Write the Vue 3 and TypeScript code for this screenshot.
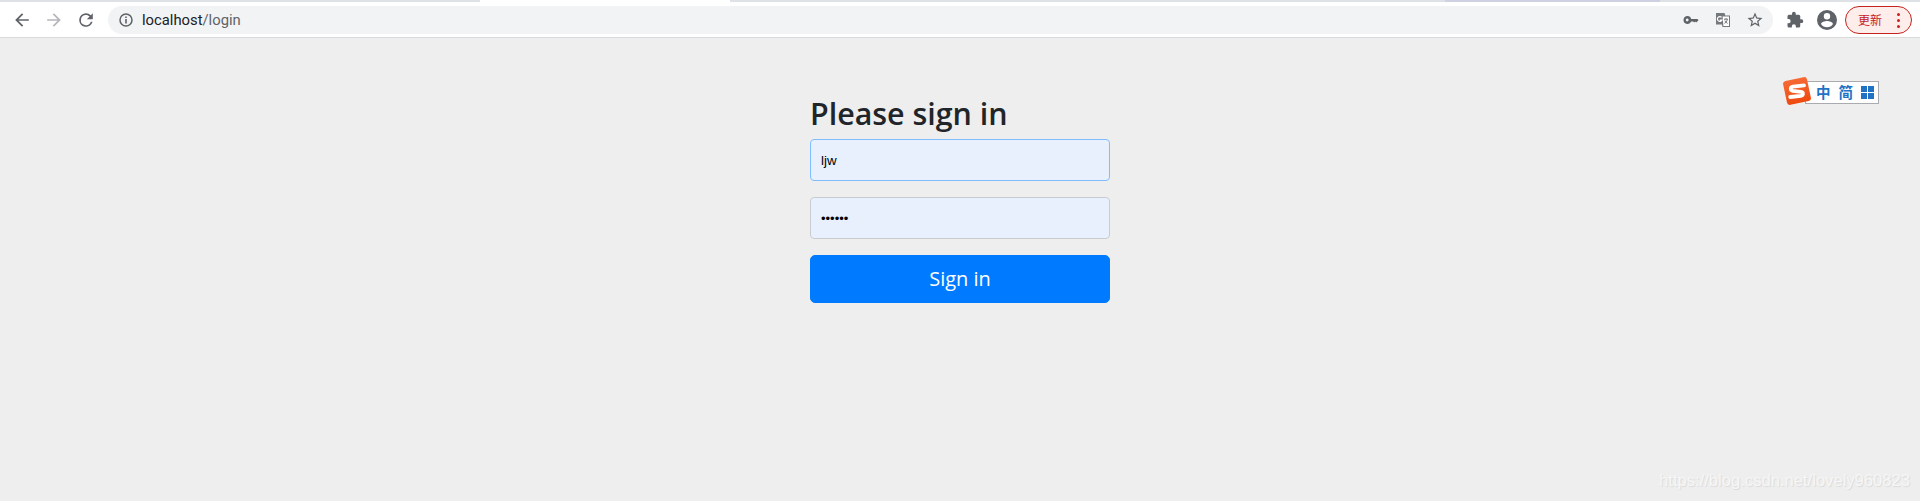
<script setup lang="ts">
const account = 'ljw'
const secret = '••••••'
</script>

<template>
  <div class="page">
    <div class="tabstrip">
      <span class="tab a"></span><span class="tab b"></span><span class="tab c"></span><span class="tab d"></span><span class="tab e"></span>
    </div>
    <header class="toolbar">
      <svg class="nav" viewBox="0 0 24 24" width="24" height="24"><path fill="#5f6368" d="M20 11H7.83l5.59-5.59L12 4l-8 8 8 8 1.41-1.41L7.83 13H20v-2z"/></svg>
      <svg class="nav" viewBox="0 0 24 24" width="24" height="24"><path fill="#b5b7ba" d="M4 11h12.17l-5.59-5.59L12 4l8 8-8 8-1.41-1.41L16.17 13H4v-2z"/></svg>
      <svg class="nav" viewBox="0 0 24 24" width="24" height="24"><path fill="#5f6368" d="M17.65 6.35A7.96 7.96 0 0 0 12 4a8 8 0 1 0 7.73 10h-2.08A6 6 0 1 1 12 6c1.66 0 3.14.69 4.22 1.78L13 11h7V4l-2.35 2.35z"/></svg>
      <div class="omnibox">
        <svg class="info" viewBox="0 0 16 16" width="16" height="16"><circle cx="8" cy="8" r="6" fill="none" stroke="#5f6368" stroke-width="1.5"/><path fill="#5f6368" d="M7.2 7h1.6v4.4H7.2zM7.2 4.6h1.6v1.5H7.2z"/></svg>
        <span class="url"><span class="host">localhost</span>/login</span>
        <span class="spacer"></span>
        <svg class="omni-icon" viewBox="0 0 18 18" width="18" height="18"><path fill="#5f6368" d="M5.5 5a4 4 0 1 0 3.7 5.6h2l1 1 1-1 1 1 2.3-2.4-1-1.2H9.2A4 4 0 0 0 5.5 5zm-.3 2.6a1.4 1.4 0 1 1 0 2.8 1.4 1.4 0 0 1 0-2.8z"/></svg>
        <svg class="omni-icon" viewBox="0 0 18 18" width="18" height="18"><path fill="#75787c" d="M2 2h8.5l.8 2.5H16V16H8.5L8 13.5H2z"/><path fill="#fff" d="M8.6 5.5h6.4v9.5H9.4z"/><path fill="none" stroke="#fff" stroke-width="1.2" d="M7.6 6.3a2.4 2.4 0 1 0 .3 2.9H5.7"/><path fill="none" stroke="#75787c" stroke-width="1" d="M10 8.2h4M12 7.2v1M13.4 8.4c-.5 2-1.8 3.4-3 4M10.8 9.6c.6 1.2 1.6 2.2 2.8 2.8"/></svg>
        <svg class="omni-icon" viewBox="0 0 24 24" width="18" height="18"><path fill="#5f6368" d="M22 9.24l-7.19-.62L12 2 9.19 8.63 2 9.24l5.46 4.73L5.82 21 12 17.27 18.18 21l-1.63-7.03L22 9.24zM12 15.4l-3.76 2.27 1-4.28-3.32-2.88 4.38-.38L12 6.1l1.71 4.04 4.38.38-3.32 2.88 1 4.28L12 15.4z"/></svg>
      </div>
      <svg class="ext" viewBox="0 0 24 24" width="18" height="18"><path fill="#5f6368" d="M20.5 11H19V7a2 2 0 0 0-2-2h-4V3.5a2.5 2.5 0 0 0-5 0V5H4a2 2 0 0 0-2 2v3.8h1.5a2.7 2.7 0 0 1 0 5.4H2V20a2 2 0 0 0 2 2h3.8v-1.5a2.7 2.7 0 0 1 5.4 0V22H17a2 2 0 0 0 2-2v-4h1.5a2.5 2.5 0 0 0 0-5z"/></svg>
      <svg class="avatar" viewBox="0 0 24 24" width="24" height="24"><path fill="#5f6368" d="M12 2a10 10 0 1 0 0 20 10 10 0 0 0 0-20zm0 3a3 3 0 1 1 0 6.4A3 3 0 0 1 12 5zm0 14.2a7.2 7.2 0 0 1-6-3.2c0-2 4-3.1 6-3.1s6 1.1 6 3.1a7.2 7.2 0 0 1-6 3.2z"/></svg>
      <div class="update">
        <span class="update-label">更新</span>
        <span class="dots"><i></i><i></i><i></i></span>
      </div>
    </header>

    <main class="content">
      <form class="signin" @submit.prevent>
        <h1 class="title">Please sign in</h1>
        <div class="field focus">{{ account }}</div>
        <div class="field secret">{{ secret }}</div>
        <button class="submit" type="submit">Sign in</button>
      </form>

      <div class="sogou">
        <svg class="sogou-logo" viewBox="0 0 28 28" width="28" height="28">
          <defs>
            <linearGradient id="sogou-fill" x1="0" y1="0" x2="0" y2="1">
              <stop offset="0" stop-color="#f66a35"/>
              <stop offset="1" stop-color="#ee4a10"/>
            </linearGradient>
          </defs>
          <rect x="1.8" y="1.8" width="24.4" height="24.4" rx="3" fill="url(#sogou-fill)" transform="rotate(-12 14 14)"/>
          <path fill="none" stroke="#fff" stroke-width="3.8" stroke-linecap="round" stroke-linejoin="round" d="M21 8.4L10 9.6c-2.8.4-3 3.6-.3 4.2l8.2 1c2.8.5 2.6 3.7-.2 4.1L7.2 20"/>
        </svg>
        <div class="sogou-bar">
          <span class="sogou-text">中</span>
          <span class="sogou-text">简</span>
          <svg viewBox="0 0 13 13" width="13" height="13"><path fill="#1f72c4" d="M0 0h6v6H0zM7 0h6v6H7zM0 7h6v6H0zM7 7h6v6H7z"/></svg>
        </div>
      </div>

      <div class="watermark">https://blog.csdn.net/lovely960823</div>
    </main>
  </div>
</template>

<style>
html, body { margin: 0; background: #eeeeee; }
</style>

<style scoped>
.page {
  height: 501px;
  display: flex;
  flex-direction: column;
  overflow: hidden;
  font-family: "Open Sans", "Noto Sans", sans-serif;
}
.tabstrip { height: 2px; display: flex; background: #fff; }
.tab { display: block; height: 2px; }
.tab.a { width: 480px; background: #dee1e6; }
.tab.b { width: 250px; background: #ffffff; }
.tab.c { width: 715px; background: #dee1e6; }
.tab.d { width: 215px; background: #cfd0e2; }
.tab.e { flex: 1; background: #dee1e6; }
.toolbar {
  height: 36px;
  box-sizing: border-box;
  border-bottom: 1px solid #d9dadb;
  background: #fff;
  display: flex;
  align-items: center;
  padding: 1px 0 0 10px;
}
.nav { margin-right: 8px; width: 24px; height: 24px; flex: none; transform: scale(.85); }
.omnibox {
  margin-left: 2px;
  width: 1665px;
  height: 28px;
  border-radius: 14px;
  background: #f1f3f4;
  display: flex;
  align-items: center;
  box-sizing: border-box;
  padding: 0 9px 0 10px;
  flex: none;
}
.info { flex: none; }
.url {
  margin-left: 8px;
  font: 14.8px/1 "Roboto", "Liberation Sans", sans-serif;
  color: #5f6368;
}
.host { color: #202124; }
.spacer { flex: 1; }
.omni-icon { flex: none; margin-left: 14px; }
.ext { margin-left: 13px; flex: none; }
.avatar { margin-left: 11px; flex: none; }
.update {
  margin-left: 6px;
  width: 67px;
  height: 28px;
  box-sizing: border-box;
  border: 1px solid #c5221f;
  border-radius: 14px;
  background: #fdeeec;
  display: flex;
  align-items: center;
  padding-left: 12px;
  flex: none;
}
.update-label {
  font: 12px/1 "Noto Sans CJK SC", sans-serif;
  color: #c5221f;
}
.dots { display: flex; flex-direction: column; gap: 3px; margin-left: 15px; }
.dots i { display: block; width: 3px; height: 3px; border-radius: 50%; background: #c5221f; }
.content {
  position: relative;
  flex: 1;
  background: #eeeeee;
  display: flex;
  justify-content: center;
  padding-top: 56px;
  box-sizing: border-box;
}
.signin {
  width: 300px;
  display: flex;
  flex-direction: column;
}
.title {
  margin: 0 0 6px;
  font-size: 30.4px;
  font-weight: 600;
  line-height: 39px;
  color: #212529;
}
.field {
  height: 42px;
  box-sizing: border-box;
  border: 1px solid #c9cccf;
  border-radius: 4px;
  background: #e8f0fe;
  padding: 0 10px;
  display: flex;
  align-items: center;
  font: 13.3px "Liberation Sans", Arial, sans-serif;
  color: #000;
  margin-bottom: 16px;
}
.focus { border-color: #80bdff; }
.secret { font-size: 13px; }
.submit {
  height: 48px;
  border: 1px solid #007bff;
  border-radius: 5px;
  background: #007bff;
  color: #fff;
  font-family: inherit;
  font-size: 20px;
  line-height: 1.5;
  cursor: pointer;
}
.sogou {
  position: absolute;
  left: 1783px;
  top: 39px;
  display: flex;
  align-items: flex-start;
}
.sogou-logo { flex: none; position: relative; z-index: 1; }
.sogou-bar {
  margin-left: -6px;
  margin-top: 4px;
  width: 74px;
  height: 23px;
  box-sizing: border-box;
  border: 1px solid #a9abae;
  background: #fff;
  display: flex;
  align-items: center;
  padding-left: 10px;
  gap: 8px;
}
.sogou-text {
  font: 700 14.5px/1 "Noto Sans CJK SC", sans-serif;
  color: #1f72c4;
}
.watermark {
  position: absolute;
  right: 10px;
  bottom: 11px;
  font: 16.6px/1 "Liberation Sans", Arial, sans-serif;
  color: #f6f6f6;
  text-shadow: 1px 1px 1px #dadada;
}
</style>
